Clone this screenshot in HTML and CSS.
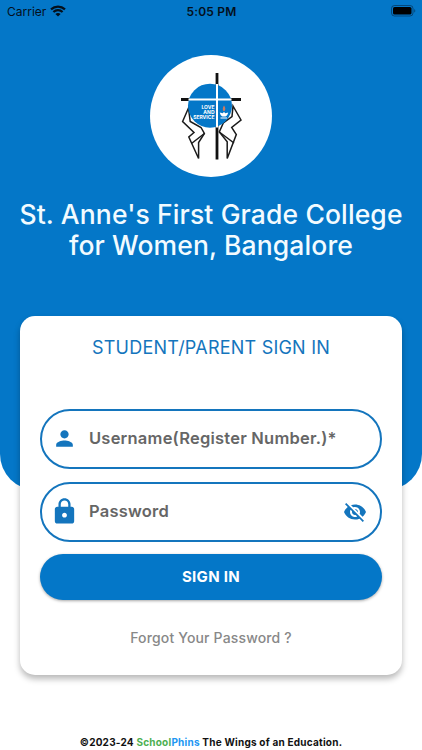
FILE: index.html
```html
<!DOCTYPE html>
<html lang="en">

<head>
    <meta charset="UTF-8" />
    <meta name="viewport" content="width=device-width, initial-scale=1.0" />
    <title>Student/Parent Sign In</title>
    <link rel="stylesheet" href="styles.css">
</head>

<body>

    <header class="hero">
        <div class="status-bar">
            <div class="carrier">
                <span>Carrier</span>
                <svg class="wifi" viewBox="0 0 16 12">
                    <path d="M1 4.4C5 .6 11 .6 15 4.4M3.4 7C6 4.6 10 4.6 12.600 7" fill="none" stroke="#04101c" stroke-width="2.200" />
                    <path d="M8 11.600L5.400 9C6.900 7.600 9.100 7.600 10.600 9Z" fill="#04101c" />
                </svg>
            </div>
            <span class="time">5:05 PM</span>
            <svg class="battery" viewBox="0 0 25 12">
                <rect x=".5" y=".5" width="21.500" height="10.500" rx="3" fill="none" stroke="#04101c" stroke-opacity=".45" />
                <rect x="2" y="2" width="18.500" height="7.500" rx="1.600" fill="#000" />
                <path d="M23.300 4v3.600c1.300-.5 1.300-3.100 0-3.600z" fill="#04101c" fill-opacity=".5" />
            </svg>
        </div>

        <div class="logo">
            <svg viewBox="150 55 122 122">
                <path d="M217 73v86.500M181 99.500h60" fill="none" stroke="#111" stroke-width="2.800" />
                <g fill="#fff" stroke="#1b1b1b" stroke-width="1.500">
                    <path d="M188.500 108L182.600 121.500L194 132.500L188.800 137L198.600 158.500V142.500L204.400 133.500L201 127.500L190.200 121.500Z" />
                    <path d="M191.500 143.500L204.400 133.500" />
                    <path d="M233 106L241 120L231.700 127.500L236.300 134.500L227.200 158.500V141.700L219.300 132L223.300 123L232 116.500Z" />
                    <path d="M219.300 132L234 143" />
                </g>
                <circle cx="210" cy="105.700" r="22" fill="#0477c8" />
                <path d="M217 84v43.500M188.500 99.500h43" fill="none" stroke="#fff" stroke-width="2" />
                <g class="motto">
                    <text x="214.500" y="108.600">LOVE</text>
                    <text x="214.500" y="113.600">AND</text>
                    <text x="214.500" y="118.600">SERVICE</text>
                </g>
                <path d="M219.800 112.500l3 .8 1.200-1.600 1.200 1.600 3-.8c-.5 2.200-1.600 3.500-2.700 4h-3c-1.200-.5-2.300-1.800-2.700-4zM220.500 117.600h6.500v.8h-6.500z" fill="#fff" />
                <path d="M224 105.500c1.600 1.800 1.600 4.200.6 5.400h-1.200c-1-1.200-.8-3.400.6-5.400z" fill="#c97b62" />
            </svg>
        </div>

        <h1 class="college">St. Anne's First Grade College<br>for Women, Bangalore</h1>
    </header>

    <form class="card">
        <h2 class="card-title">STUDENT/PARENT SIGN IN</h2>

        <label class="field">
            <svg class="icon person" viewBox="0 0 24 24">
                <path d="M12 12c2.210 0 4-1.790 4-4s-1.790-4-4-4-4 1.790-4 4 1.790 4 4 4zm0 2c-2.670 0-8 1.340-8 4v2h16v-2c0-2.660-5.330-4-8-4z" />
            </svg>
            <input type="text" placeholder="Username(Register Number.)*">
        </label>

        <label class="field">
            <svg class="icon lock" viewBox="0 0 24 24">
                <path d="M18 8h-1V6c0-2.760-2.240-5-5-5S7 3.240 7 6v2H6c-1.100 0-2 .9-2 2v10c0 1.100.9 2 2 2h12c1.100 0 2-.9 2-2V10c0-1.100-.9-2-2-2zm-6 9c-1.100 0-2-.9-2-2s.9-2 2-2 2 .9 2 2-.9 2-2 2zm3.100-9H8.900V6c0-1.710 1.390-3.100 3.100-3.100 1.710 0 3.100 1.390 3.100 3.100v2z" />
            </svg>
            <input class="password" type="password" placeholder="Password">
            <svg class="icon eye" viewBox="0 0 24 24">
                <path d="M12 7c2.760 0 5 2.240 5 5 0 .65-.13 1.260-.36 1.830l2.920 2.920c1.510-1.260 2.700-2.890 3.430-4.750-1.730-4.390-6-7.500-11-7.500-1.400 0-2.740.25-3.980.7l2.160 2.160C10.740 7.130 11.350 7 12 7zM2 4.270l2.280 2.280.46.46C3.080 8.300 1.780 10.020 1 12c1.730 4.390 6 7.500 11 7.500 1.550 0 3.030-.3 4.380-.84l.42.42L19.730 22 21 20.730 3.270 3 2 4.270zM7.530 9.800l1.550 1.550c-.05.21-.08.43-.08.65 0 1.660 1.340 3 3 3 .22 0 .44-.03.65-.08l1.550 1.550c-.67.33-1.410.53-2.200.53-2.760 0-5-2.240-5-5 0-.79.2-1.530.53-2.200zm4.310-.78l3.150 3.150.02-.16c0-1.660-1.340-3-3-3l-.17.01z" />
            </svg>
        </label>

        <button class="sign-in" type="submit">SIGN IN</button>

        <a class="forgot">Forgot Your Password ?</a>
    </form>

    <footer class="footer">©2023-24 <span class="school">School</span><span class="phins">Phins</span> The Wings of an Education.</footer>

</body>

</html>
```
FILE: styles.css
```css
:root {
    --primary: #0477c8;
    --outline: #1475bd;
    --hint: #666;
}

* {
    box-sizing: border-box;
    margin: 0;
    padding: 0;
    font-family: Inter, "Liberation Sans", sans-serif;
}

body {
    height: 750px;
    display: flex;
    flex-direction: column;
    background: #fff;
    overflow: hidden;
}

.hero {
    flex: none;
    height: 490px;
    background: var(--primary);
    border-radius: 0 0 36px 36px;
    display: flex;
    flex-direction: column;
    align-items: center;
}

.status-bar {
    width: 100%;
    height: 22px;
    padding: 0 6px 0 7px;
    display: grid;
    grid-template-columns: 1fr auto 1fr;
    align-items: center;
    color: #04101c;
    font-size: 12px;
}

.carrier {
    display: flex;
    align-items: center;
    gap: 4px;
}

.wifi {
    width: 16px;
    height: 12px;
}

.time {
    font-weight: 600;
    letter-spacing: 0.2px;
}

.battery {
    width: 25px;
    height: 12px;
    justify-self: end;
}

.logo {
    width: 122px;
    height: 122px;
    margin-top: 33px;
    border-radius: 50%;
    background: #fff;
}

.logo svg {
    display: block;
}

.motto {
    fill: #fff;
    font-size: 5px;
    font-weight: 700;
    text-anchor: end;
}

.college {
    margin-top: 22px;
    color: #f2fbff;
    font-size: 26.500px;
    font-weight: 500;
    line-height: 31px;
    text-align: center;
    white-space: nowrap;
    letter-spacing: 0.12px;
}

.card {
    flex: none;
    height: 359px;
    margin: -174px 20px 0;
    padding: 20px 20px 0;
    display: flex;
    flex-direction: column;
    border-radius: 15px;
    background: #fff;
    box-shadow: 0 4px 6px rgba(0, 0, 0, 0.28);
}

.card-title {
    height: 73px;
    color: var(--outline);
    font-size: 18px;
    font-weight: 400;
    line-height: 23px;
    text-align: center;
    letter-spacing: 0.22px;
}

.field {
    height: 60px;
    margin-bottom: 13px;
    padding: 0 13px 1px 10px;
    display: flex;
    align-items: center;
    border: 2px solid var(--outline);
    border-radius: 30px;
}

.icon {
    flex: none;
    fill: var(--outline);
}

.person {
    width: 25px;
    height: 25px;
}

.lock {
    width: 29px;
    height: 29px;
    margin-left: -2px;
    margin-right: -2px;
}

.eye {
    width: 24px;
    height: 24px;
}

.field input {
    flex: 1;
    min-width: 0;
    margin-left: 12px;
    padding-bottom: 1px;
    border: none;
    outline: none;
    background: transparent;
    font-size: 16.500px;
    font-weight: 600;
    letter-spacing: 0.22px;
}

.field input::placeholder {
    color: var(--hint);
}

.sign-in {
    height: 46px;
    margin-top: -1px;
    padding-bottom: 2px;
    border: none;
    border-radius: 23px;
    background: var(--primary);
    box-shadow: 0 1px 3px rgba(0, 0, 0, 0.35);
    color: #fff;
    font-size: 15px;
    font-weight: 700;
    letter-spacing: 0.3px;
}

.forgot {
    margin-top: 29px;
    color: #888;
    font-size: 14px;
    font-weight: 500;
    line-height: 18px;
    text-align: center;
    letter-spacing: 0.16px;
}

.footer {
    margin-top: 61px;
    color: #111;
    font-size: 10px;
    font-weight: 700;
    line-height: 13px;
    text-align: center;
    letter-spacing: 0.22px;
}

.school {
    color: #4caf50;
}

.phins {
    color: #2196f3;
}
```
